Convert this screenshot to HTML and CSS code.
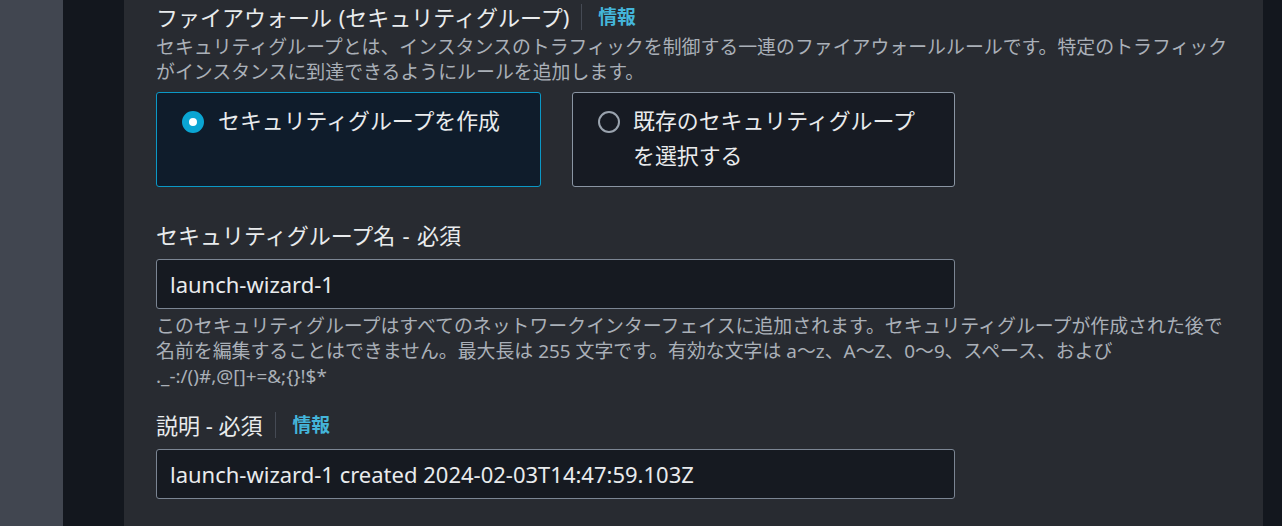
FILE: index.html
```html
<!DOCTYPE html>
<html lang="ja">
<head>
<meta charset="utf-8">
<title>ファイアウォール</title>
<link rel="stylesheet" href="styles.css">
</head>
<body>
<div class="rail"></div>
<div class="nav"></div>
<main class="main">
  <div class="head-row">
    <h2 class="heading">ファイアウォール (セキュリティグループ)</h2>
    <span class="sep"></span>
    <a class="info" href="#">情報</a>
  </div>
  <p class="desc">セキュリティグループとは、インスタンスのトラフィックを制御する一連のファイアウォールルールです。特定のトラフィック<br>がインスタンスに到達できるようにルールを追加します。</p>

  <div class="tiles">
    <div class="tile tile-on">
      <span class="radio radio-on"></span>
      <span class="tile-text">セキュリティグループを作成</span>
    </div>
    <div class="tile">
      <span class="radio"></span>
      <span class="tile-text">既存のセキュリティグループを選択する</span>
    </div>
  </div>

  <div class="label-row label-first">
    <span class="label">セキュリティグループ名 - 必須</span>
  </div>
  <div class="input">launch-wizard-1</div>
  <p class="help">このセキュリティグループはすべてのネットワークインターフェイスに追加されます。セキュリティグループが作成された後で<br>名前を編集することはできません。最大長は 255 文字です。有効な文字は a～z、A～Z、0～9、スペース、および<br>._-:/()#,@[]+=&amp;;{}!$*</p>

  <div class="label-row label-second">
    <span class="label label-short">説明 - 必須</span>
    <span class="sep sep-small"></span>
    <a class="info" href="#">情報</a>
  </div>
  <div class="input">launch-wizard-1 created 2024-02-03T14:47:59.103Z</div>
</main>
<div class="scroll"></div>
</body>
</html>
```

FILE: styles.css
```css
html, body {
  margin: 0;
  padding: 0;
}

body {
  display: flex;
  width: 1282px;
  height: 526px;
  overflow: hidden;
  background: #282b31;
  font-family: "Noto Sans", "Noto Sans CJK JP", sans-serif;
  color: #e9ebed;
}

.rail {
  width: 63px;
  flex: 0 0 63px;
  background: #414650;
}

.nav {
  width: 61px;
  flex: 0 0 61px;
  background: #13171e;
}

.main {
  flex: 1 1 auto;
  padding: 3px 31px 0 32px;
  background: #282b31;
  min-width: 0;
}

.scroll {
  width: 19px;
  flex: 0 0 19px;
  background: #13171e;
}

.head-row {
  display: flex;
  align-items: center;
  height: 28px;
}

.heading {
  margin: 0;
  font-size: 22px;
  line-height: 28px;
  font-weight: 400;
  word-spacing: 1px;
  color: #e9ebed;
  white-space: nowrap;
}

.sep {
  display: block;
  width: 1px;
  height: 26px;
  background: #454a54;
  margin: 0 16px 0 12px;
}

.info {
  font-size: 18.8px;
  line-height: 28px;
  font-weight: 700;
  color: #44b5da;
  text-decoration: none;
}

.desc {
  margin: 4px 0 0;
  font-size: 18.9px;
  line-height: 25px;
  color: #aab0b8;
  white-space: nowrap;
}

.tiles {
  display: grid;
  grid-template-columns: 385px 383px;
  column-gap: 31px;
  margin-top: 7px;
}

.tile {
  display: flex;
  align-items: flex-start;
  gap: 13px;
  height: 95px;
  box-sizing: border-box;
  padding: 10px 20px 0 25px;
  border: 1px solid #8a95a3;
  border-radius: 3px;
  background: #171b23;
}

.tile-on {
  border-color: #0b98c6;
  background: #0f1c2b;
  gap: 14px;
}

.tile-text {
  font-size: 21.9px;
  line-height: 35px;
  color: #e9ebed;
}

.radio {
  flex: 0 0 auto;
  width: 22px;
  height: 22px;
  box-sizing: border-box;
  margin-top: 8px;
  border: 2px solid #9aa3ae;
  border-radius: 50%;
}

.radio-on {
  border: 7px solid #0aa5d3;
  background: #ffffff;
}

.label-row {
  display: flex;
  align-items: center;
  height: 28px;
}

.label-first {
  margin-top: 34px;
}

.label-second {
  margin-top: 22px;
}

.label {
  font-size: 22px;
  line-height: 28px;
  word-spacing: 1.5px;
  color: #e9ebed;
  white-space: nowrap;
}

.label-short {
  word-spacing: 0;
}

.sep-small {
  margin: 0 17px 0 12px;
}

.input {
  width: 799px;
  height: 50px;
  box-sizing: border-box;
  margin-top: 10px;
  padding: 0 13px;
  border: 1px solid #7b8593;
  border-radius: 3px;
  background: #161a21;
  font-size: 22px;
  line-height: 48px;
  color: #e9ebed;
  white-space: nowrap;
}

.help {
  margin: 5px 0 0;
  font-size: 18.9px;
  line-height: 25px;
  color: #aab0b8;
  white-space: nowrap;
}
```
